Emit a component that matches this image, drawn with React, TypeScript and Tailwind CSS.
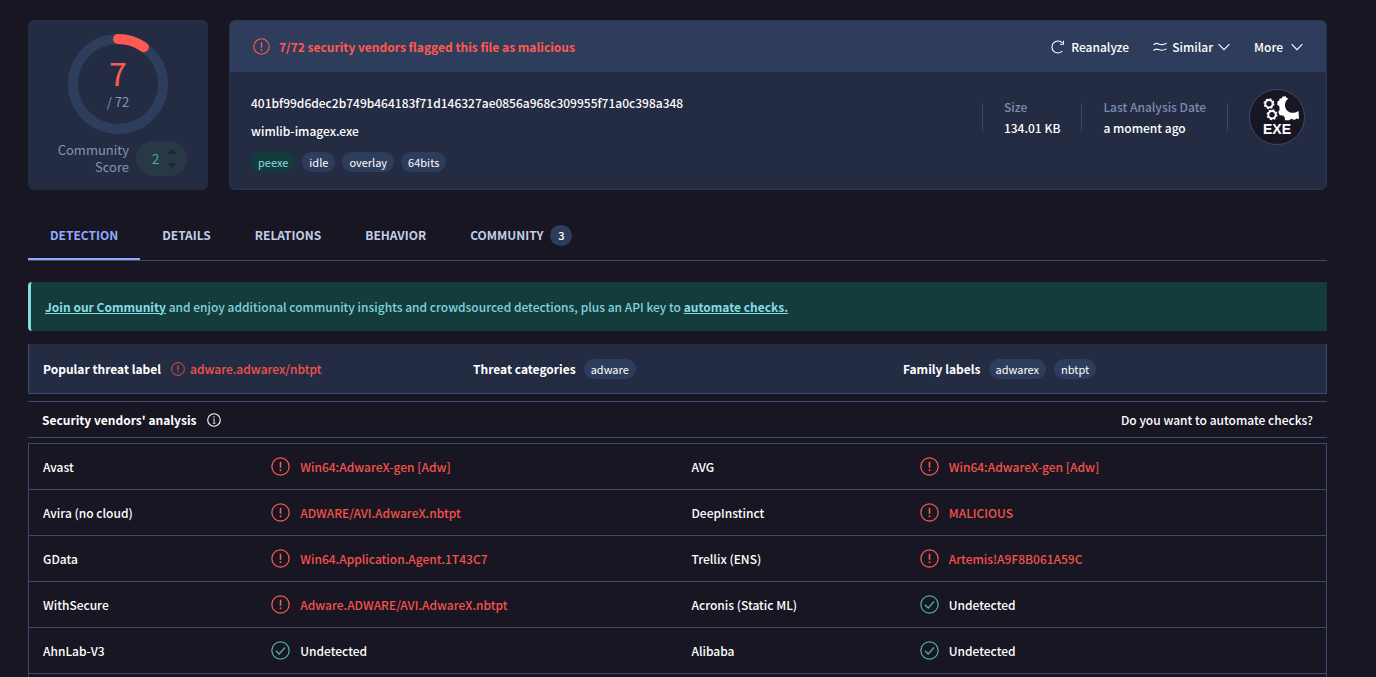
import type { ReactNode } from "react";
import clsx from "clsx";

type Result = {
  vendor: string;
  verdict: string;
  flagged: boolean;
};

const results: [Result, Result][] = [
  [
    { vendor: "Avast", verdict: "Win64:AdwareX-gen [Adw]", flagged: true },
    { vendor: "AVG", verdict: "Win64:AdwareX-gen [Adw]", flagged: true },
  ],
  [
    { vendor: "Avira (no cloud)", verdict: "ADWARE/AVI.AdwareX.nbtpt", flagged: true },
    { vendor: "DeepInstinct", verdict: "MALICIOUS", flagged: true },
  ],
  [
    { vendor: "GData", verdict: "Win64.Application.Agent.1T43C7", flagged: true },
    { vendor: "Trellix (ENS)", verdict: "Artemis!A9F8B061A59C", flagged: true },
  ],
  [
    { vendor: "WithSecure", verdict: "Adware.ADWARE/AVI.AdwareX.nbtpt", flagged: true },
    { vendor: "Acronis (Static ML)", verdict: "Undetected", flagged: false },
  ],
  [
    { vendor: "AhnLab-V3", verdict: "Undetected", flagged: false },
    { vendor: "Alibaba", verdict: "Undetected", flagged: false },
  ],
];

const tabs = [
  { label: "DETECTION", active: true },
  { label: "DETAILS" },
  { label: "RELATIONS" },
  { label: "BEHAVIOR" },
  { label: "COMMUNITY", count: 3 },
];

function AlertIcon({ className }: { className?: string }) {
  return (
    <svg aria-hidden="true" className={clsx("shrink-0", className)} fill="none" viewBox="0 0 20 20">
      <circle cx="10" cy="10" r="9.1" stroke="currentColor" strokeWidth="1.3" />
      <path d="M10 5v6.4" stroke="currentColor" strokeWidth="1.6" />
      <circle cx="10" cy="14" fill="currentColor" r="1" />
    </svg>
  );
}

function CheckIcon({ className }: { className?: string }) {
  return (
    <svg aria-hidden="true" className={clsx("shrink-0", className)} fill="none" viewBox="0 0 20 20">
      <circle cx="10" cy="10" r="9.1" stroke="currentColor" strokeWidth="1.3" />
      <path d="M5.2 10.2l3.4 3.4 6.2-6.8" stroke="currentColor" strokeWidth="1.4" />
    </svg>
  );
}

function InfoIcon() {
  return (
    <svg aria-hidden="true" className="size-3.5" fill="none" viewBox="0 0 14 14">
      <circle cx="7" cy="7" r="6.3" stroke="currentColor" strokeWidth="1.1" />
      <path d="M5.9 6.2h1.3v4M5.8 10.2h2.7" stroke="currentColor" strokeWidth="0.8" />
      <circle cx="7" cy="4" fill="currentColor" r="0.7" />
    </svg>
  );
}

function ChevronIcon() {
  return (
    <svg aria-hidden="true" className="h-2 w-3" fill="none" viewBox="0 0 12 8">
      <path d="M0.6 1.2L6 6.6l5.4-5.4" stroke="currentColor" strokeWidth="1.1" />
    </svg>
  );
}

function ReloadIcon() {
  return (
    <svg aria-hidden="true" className="size-3.5" fill="none" viewBox="0 0 14 14">
      <path d="M11.4 11A6 6 0 1 1 11.4 3" stroke="currentColor" strokeWidth="1.1" />
      <path d="M12.4 0.8v3.4H9" stroke="currentColor" strokeWidth="1.1" />
    </svg>
  );
}

function SimilarIcon() {
  return (
    <svg aria-hidden="true" className="h-2.5 w-3.5" fill="none" viewBox="0 0 14 10">
      <path
        d="M0.5 2.8C2 1.2 3.7 1.1 5.6 1.9C8 2.9 10 3.3 13.5 1.2M0.5 8.5C2 6.9 3.7 6.8 5.6 7.6C8 8.6 10 9 13.5 6.9"
        stroke="currentColor"
        strokeWidth="1.1"
      />
    </svg>
  );
}

function ExeIcon() {
  return (
    <svg aria-label="EXE file" className="size-14 shrink-0" role="img" viewBox="0 0 56 56">
      <circle cx="28" cy="28" fill="#171622" r="27.5" stroke="#3b4a6d" />
      <g fill="none" stroke="#fff">
        <circle cx="20" cy="14.7" r="3.7" strokeWidth="2" />
        <circle cx="20" cy="14.7" r="4.9" strokeDasharray="1.9 1.95" strokeWidth="1.2" />
        <circle cx="23" cy="25.7" r="3.7" strokeWidth="2" />
        <circle cx="23" cy="25.7" r="4.9" strokeDasharray="1.9 1.95" strokeWidth="1.2" />
      </g>
      <path
        d="M30.3 9.8L32.8 9.3L33.6 7.6L36.5 7.3L37.5 8.7L39.3 9.6C35.6 12.5 34.9 17.6 37.6 20.9C40.4 24.3 45.4 24.7 48.2 22.4L49.6 22.3L50 29.9L47.5 29.5L45.5 31L42.5 29.8L40 31.3L36 31.2L35.8 28.5L34 26.6L30.8 26.3L29.2 23L30.6 21L30.4 17.5L28.3 15.7L28.6 12.2L30.4 11.5Z"
        fill="#fff"
      />
      <text
        fill="#fff"
        fontFamily="'Liberation Sans', Arial, sans-serif"
        fontSize="14"
        fontWeight="700"
        textAnchor="middle"
        x="28"
        y="45"
      >
        EXE
      </text>
    </svg>
  );
}

function Tag({ children, green = false }: { children: ReactNode; green?: boolean }) {
  return (
    <a
      className={clsx(
        "flex h-5 items-center rounded-full px-[7px] text-[11px] leading-5 font-normal",
        green ? "bg-[#153c3d] text-[#86dbe2]" : "bg-[#2f3d5c] text-white",
      )}
      href="#"
    >
      {children}
    </a>
  );
}

function ScoreGauge({ flagged, total }: { flagged: number; total: number }) {
  return (
    <div className="grid size-[100px] place-items-center">
      <svg aria-hidden="true" className="col-start-1 row-start-1 size-full -rotate-90" fill="none" viewBox="0 0 100 100">
        <circle cx="50" cy="50" r="45" stroke="#2f3d5c" strokeWidth="10" />
        <circle
          cx="50"
          cy="50"
          pathLength={total}
          r="45"
          stroke="#ff5a50"
          strokeDasharray={`${flagged} ${total}`}
          strokeLinecap="round"
          strokeWidth="10"
        />
      </svg>
      <div className="col-start-1 row-start-1 text-center">
        <div className="text-[32px] leading-9 text-[#ff5a50]">{flagged}</div>
        <div className="text-[13px] leading-6 text-[#8494b6]">{`/ ${total}`}</div>
      </div>
    </div>
  );
}

function ScoreCard() {
  return (
    <section className="flex w-[180px] shrink-0 flex-col items-center rounded-md bg-[#242c43] py-3.5">
      <ScoreGauge flagged={7} total={72} />
      <div className="mt-[7px] flex items-start gap-[7px] self-end pr-[21px]">
        <div className="text-right text-[13px] leading-[17px] text-[#8494b6]">
          Community
          <br />
          Score
        </div>
        <div className="flex h-[35px] w-[51px] items-center justify-center gap-2 rounded-full bg-[#293846] pl-1.5 text-[13px] text-[#4fb096]">
          2
          <svg aria-hidden="true" className="h-[19px] w-2.5" fill="#1f2737" viewBox="0 0 10 19">
            <path d="M0 5L5 0l5 5zM0 14l5 5 5-5z" />
          </svg>
        </div>
      </div>
    </section>
  );
}

function Fact({ label, value }: { label: string; value: string }) {
  return (
    <div className="flex items-center gap-[21px]">
      <div className="h-7 w-px bg-[#3b4a6d]" />
      <dl className="text-xs leading-[21px] font-medium">
        <dt className="text-[#7c8cae]">{label}</dt>
        <dd>{value}</dd>
      </dl>
    </div>
  );
}

function FileCard() {
  return (
    <section className="min-w-0 flex-1 overflow-hidden rounded-md border border-[#2a3650] bg-[#242c43]">
      <header className="flex h-[51px] items-center justify-between bg-[#2f3d5c] px-[23px]">
        <div className="flex items-center gap-[9px] text-xs font-bold text-[#ff5a50]">
          <AlertIcon className="size-[17px]" />
          7/72 security vendors flagged this file as malicious
        </div>
        <div className="flex items-center gap-6 text-xs font-medium">
          <button className="flex items-center gap-1.5" type="button">
            <ReloadIcon />
            Reanalyze
          </button>
          <button className="flex items-center gap-[5px]" type="button">
            <SimilarIcon />
            Similar
            <ChevronIcon />
          </button>
          <button className="flex items-center gap-2" type="button">
            More
            <ChevronIcon />
          </button>
        </div>
      </header>
      <div className="flex items-start justify-between px-[21px] pt-[17px] pb-4">
        <div className="text-xs leading-7 font-medium">
          <div>401bf99d6dec2b749b464183f71d146327ae0856a968c309955f71a0c398a348</div>
          <div>wimlib-imagex.exe</div>
          <div className="mt-[7px] flex gap-[7px]">
            <Tag green>peexe</Tag>
            <Tag>idle</Tag>
            <Tag>overlay</Tag>
            <Tag>64bits</Tag>
          </div>
        </div>
        <div className="flex items-center gap-[21px]">
          <Fact label="Size" value="134.01 KB" />
          <Fact label="Last Analysis Date" value="a moment ago" />
          <div className="h-7 w-px bg-[#3b4a6d]" />
          <ExeIcon />
        </div>
      </div>
    </section>
  );
}

function TabBar() {
  return (
    <nav className="mt-[22px] flex h-[49px] border-b border-[#3b4a6d] text-xs font-bold">
      {tabs.map((tab) => (
        <a
          aria-current={tab.active ? "page" : undefined}
          className={clsx(
            "flex items-center gap-[7px] border-b-2 px-[22px]",
            tab.active ? "border-[#8fabff] text-[#8fabff]" : "border-transparent text-[#c3cde4]",
          )}
          href="#"
          key={tab.label}
        >
          {tab.label}
          {tab.count ? (
            <span className="grid h-[21px] w-[22px] place-items-center rounded-full bg-[#2f3d5c] text-[11px] font-medium text-white">
              {tab.count}
            </span>
          ) : null}
        </a>
      ))}
    </nav>
  );
}

function ThreatSummary() {
  return (
    <section className="mt-[13px] grid h-[50px] grid-cols-3 items-center gap-[21px] border-x border-b border-[#3b4a6d] bg-[#242c43] px-3.5 text-xs">
      <div className="flex items-center gap-2.5">
        <span className="font-bold">Popular threat label</span>
        <span className="flex items-center gap-[5px] font-medium text-[#f4524a]">
          <AlertIcon className="size-3.5" />
          adware.adwarex/nbtpt
        </span>
      </div>
      <div className="flex items-center gap-2">
        <span className="font-bold">Threat categories</span>
        <Tag>adware</Tag>
      </div>
      <div className="flex items-center gap-2">
        <span className="font-bold">Family labels</span>
        <Tag>adwarex</Tag>
        <Tag>nbtpt</Tag>
      </div>
    </section>
  );
}

function ResultCells({ result }: { result: Result }) {
  return (
    <>
      <th className="h-[46px] border-b border-[#3b4a6d] px-3.5 text-left font-medium" scope="row">
        {result.vendor}
      </th>
      <td className="h-[46px] border-b border-[#3b4a6d] px-3.5">
        <div className="flex items-center gap-2.5">
          {result.flagged ? (
            <AlertIcon className="size-[19px] text-[#ff5a50]" />
          ) : (
            <CheckIcon className="size-[19px] text-[#4fb0a0]" />
          )}
          <span className={clsx("font-medium", result.flagged && "text-[#f4524a]")}>{result.verdict}</span>
        </div>
      </td>
    </>
  );
}

export default function App() {
  return (
    <main className="flex min-h-screen flex-col bg-[#171622] pt-5 pr-[49px] pl-7 font-['Noto_Sans_CJK_SC',sans-serif] text-white">
      <div className="flex gap-[21px]">
        <ScoreCard />
        <FileCard />
      </div>
      <TabBar />
      <p className="mt-[21px] flex h-[49px] items-center rounded-l-sm border-l-3 border-[#86dbe2] bg-[#153c3d] px-3.5 text-xs font-medium text-[#7fd3da]">
        <span>
          <a className="font-bold text-[#86dbe2] underline" href="#">
            Join our Community
          </a>{" "}
          and enjoy additional community insights and crowdsourced detections, plus an API key to{" "}
          <a className="font-bold text-[#86dbe2] underline" href="#">
            automate checks.
          </a>
        </span>
      </p>
      <ThreatSummary />
      <div className="mt-[7px] flex h-[37px] items-center justify-between border-y border-[#3b4a6d] px-3.5 text-xs">
        <h2 className="flex items-center gap-[11px] font-bold">
          Security vendors' analysis
          <InfoIcon />
        </h2>
        <a className="font-medium" href="#">
          Do you want to automate checks?
        </a>
      </div>
      <div className="mt-[5px] flex-1 border-x border-t border-[#3b4a6d]">
        <table className="w-full table-fixed border-separate border-spacing-0 text-xs">
          <colgroup>
            <col className="w-[17.6%]" />
            <col className="w-[32.4%]" />
            <col className="w-[17.6%]" />
            <col className="w-[32.4%]" />
          </colgroup>
          <tbody>
            {results.map(([left, right]) => (
              <tr key={left.vendor}>
                <ResultCells result={left} />
                <ResultCells result={right} />
              </tr>
            ))}
          </tbody>
        </table>
      </div>
    </main>
  );
}
